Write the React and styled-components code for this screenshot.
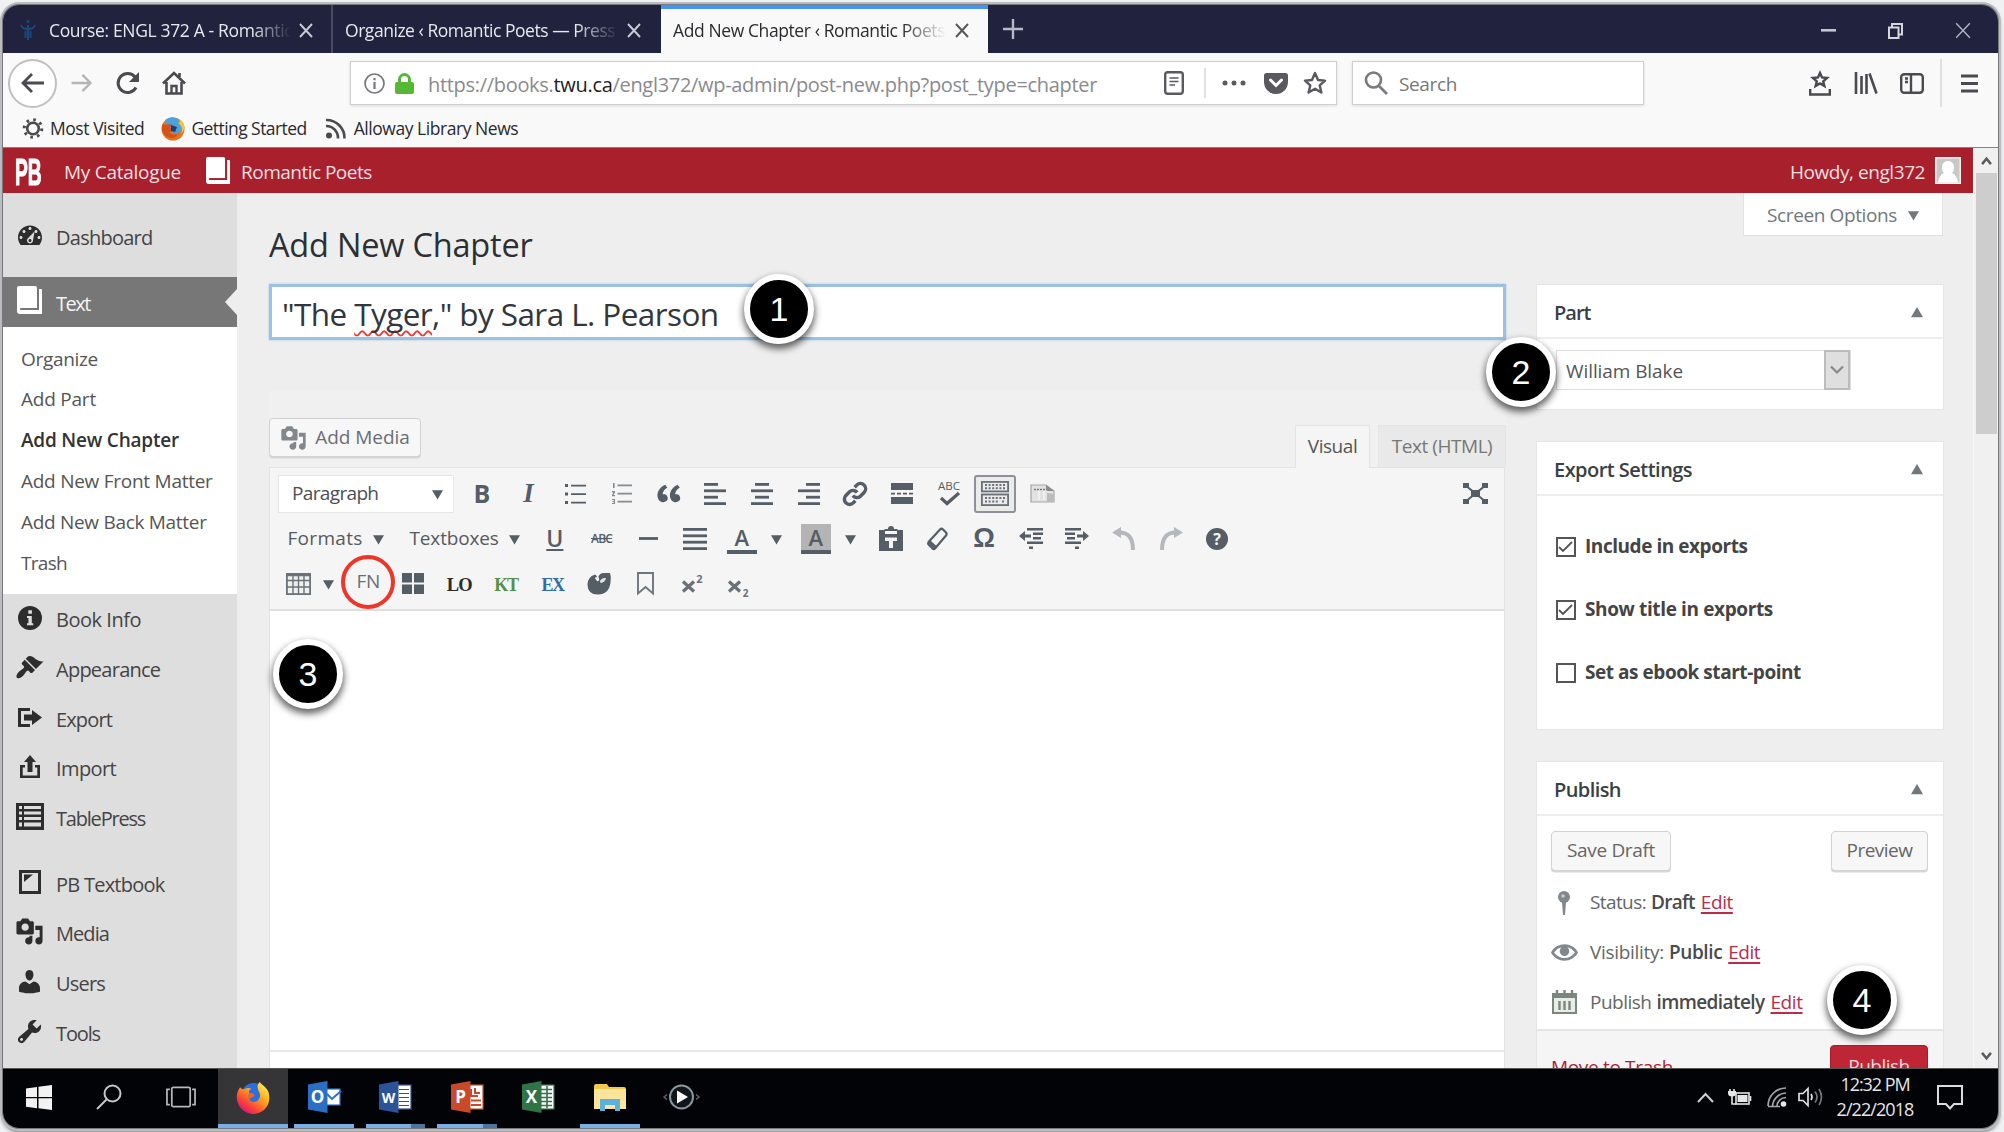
import React from 'react';
import styled, { createGlobalStyle, css } from 'styled-components';

const Global = createGlobalStyle`
  *, *::before, *::after { box-sizing: border-box; }
  body { margin: 0; background: #f0f1f3; font-family: "Open Sans", "Noto Sans", sans-serif; color: #555; }
  svg { display: block; flex: none; overflow: visible; }
`;

/* ---------- shared ---------- */

const T = styled.span`
  display: inline-block;
  flex: none;
  white-space: nowrap;
  line-height: 1.36;
  font-size: ${(p) => p.$s || 19}px;
  font-weight: ${(p) => p.$w || 400};
  letter-spacing: ${(p) => p.$ls || 0}px;
  padding: ${(p) => p.$pt || 0}px 0 ${(p) => p.$pb || 0}px;
  margin-left: ${(p) => p.$ml || 0};
  ${(p) => p.$c && css`color: ${p.$c};`}
`;

const Icon = ({ size = 26, w, h, box = '0 0 20 20', color = 'currentColor', d, children }) => (
  <svg width={w || size} height={h || size} viewBox={box} preserveAspectRatio="none" fill={color}>
    {d ? <path d={d} fillRule="evenodd" /> : children}
  </svg>
);

const D = {
  dashboard: 'M3.76 16h12.48c1.1-1.37 1.76-3.11 1.76-5 0-4.42-3.58-8-8-8s-8 3.58-8 8c0 1.89.66 3.63 1.76 5zM10 4c.55 0 1 .45 1 1s-.45 1-1 1-1-.45-1-1 .45-1 1-1zM6 6c.55 0 1 .45 1 1s-.45 1-1 1-1-.45-1-1 .45-1 1-1zm8 0c.55 0 1 .45 1 1s-.45 1-1 1-1-.45-1-1 .45-1 1-1zm-5.37 5.55L13 7l-1 6c0 1.1-.9 2-2 2s-2-.9-2-2c0-.57.24-1.08.63-1.45zM4 10c.55 0 1 .45 1 1s-.45 1-1 1-1-.45-1-1 .45-1 1-1zm12 0c.55 0 1 .45 1 1s-.45 1-1 1-1-.45-1-1 .45-1 1-1zm-5 3c0-.55-.45-1-1-1s-1 .45-1 1 .45 1 1 1 1-.45 1-1z',
  users: 'M10 9.25c-2.27 0-2.73-3.44-2.73-3.44C7 4.02 7.82 2 9.97 2c2.16 0 2.98 2.02 2.71 3.81 0 0-.41 3.44-2.68 3.44zm0 2.57L12.72 10c2.39 0 4.52 2.33 4.52 4.53v2.49s-3.65 1.13-7.24 1.13c-3.65 0-7.24-1.13-7.24-1.13v-2.49c0-2.25 1.94-4.48 4.47-4.48z',
  tools: 'M16.68 9.77c-1.34 1.34-3.3 1.67-4.95.99l-5.41 6.52c-.99.99-2.59.99-3.58 0s-.99-2.59 0-3.57l6.52-5.42c-.68-1.65-.35-3.61.99-4.95 1.28-1.28 3.12-1.62 4.72-1.06l-2.89 2.89 2.82 2.82 2.86-2.87c.53 1.58.18 3.39-1.08 4.65zM3.81 16.21c.4.39 1.04.39 1.43 0 .4-.4.4-1.04 0-1.43-.39-.4-1.03-.4-1.43 0-.39.39-.39 1.03 0 1.43z',
  brush: 'M14.48 11.06L7.41 3.99l1.5-1.5c.5-.56 2.3-.47 3.51.32 1.21.8 1.43 1.28 2.91 2.1 1.18.64 2.45 1.26 4.45.85zm-.71.71L6.7 4.7 4.93 6.47c-.39.39-.39 1.02 0 1.41l1.06 1.06c.39.39.39 1.03 0 1.42-.6.6-1.43 1.11-2.21 1.69-.35.26-.7.53-1.01.84C1.43 14.23.4 16.08 1.4 17.07c.99 1 2.84-.03 4.18-1.36.31-.31.58-.66.85-1.02.57-.78 1.08-1.61 1.69-2.21.39-.39 1.02-.39 1.41 0l1.06 1.06c.39.39 1.02.39 1.41 0z',
  media: 'M13 11V4c0-.55-.45-1-1-1h-1.67L9 1H5L3.67 3H2c-.55 0-1 .45-1 1v7c0 .55.45 1 1 1h10c.55 0 1-.45 1-1zM7 4.5c1.38 0 2.5 1.12 2.5 2.5S8.38 9.5 7 9.5 4.5 8.38 4.5 7 5.62 4.5 7 4.5zM14 6h5v10.5c0 1.38-1.12 2.5-2.5 2.5S14 17.88 14 16.5s1.12-2.5 2.5-2.5c.17 0 .34.02.5.05V9h-3V6zm-4 8.05V13h2v3.5c0 1.38-1.12 2.5-2.5 2.5S7 17.88 7 16.5 8.12 14 9.5 14c.17 0 .34.02.5.05z',
  eye: 'M19.7 9.4C17.7 6 14 3.9 10 3.9S2.3 6 .3 9.4L0 10l.3.6c2 3.4 5.7 5.5 9.7 5.5s7.7-2.1 9.7-5.5l.3-.6-.3-.6zM10 14.1c-3.1 0-6-1.6-7.7-4.1C3.6 8 5.7 6.6 8 6.1c-.9.6-1.5 1.7-1.5 2.9 0 1.9 1.6 3.5 3.5 3.5s3.5-1.6 3.5-3.5c0-1.2-.6-2.3-1.5-2.9 2.3.5 4.4 1.9 5.7 3.9-1.7 2.5-4.6 4.1-7.7 4.1z',
  quote: 'M9.49 13.22c0-.74-.2-1.38-.61-1.9-.62-.78-1.83-.88-2.53-.72-.29-1.65 1.11-3.75 2.92-4.65L7.88 4c-2.73 1.3-5.42 4.28-4.96 8.05C3.21 14.43 4.59 16 6.54 16c.85 0 1.56-.25 2.12-.75s.83-1.18.83-2.03zm8.05 0c0-.74-.2-1.38-.61-1.9-.63-.78-1.83-.88-2.53-.72-.29-1.65 1.11-3.75 2.92-4.65L15.93 4c-2.73 1.3-5.41 4.28-4.95 8.05.29 2.38 1.66 3.95 3.61 3.95.85 0 1.56-.25 2.12-.75s.83-1.18.83-2.03z',
};

const Screen = styled.div`
  position: relative;
  width: 2004px;
  height: 1132px;
  padding: 5px 6px 4px 3px;
  background: #f0f1f3;
  overflow: hidden;
`;

const Window = styled.div`
  display: flex;
  flex-direction: column;
  width: 1995px;
  height: 1123px;
  border-radius: 16px;
  overflow: hidden;
  background: #eee;
  box-shadow: 0 0 0 1px #77797c, 0 0 0 3px #babcbf, 0 3px 4px 1px rgba(0, 0, 0, 0.55);
`;

/* ---------- browser chrome ---------- */

const TabStrip = styled.div`
  display: flex;
  height: 48px;
  flex: none;
  background: #20223e;
  color: #e8e8ee;
`;

const Tab = styled.div`
  display: flex;
  align-items: center;
  width: ${(p) => p.$w}px;
  padding: 2px 0 0 ${(p) => p.$pl}px;
  border-right: ${(p) => (p.$divider ? '2px solid #4a4b62' : '0')};
  ${(p) => p.$active && css`
    background: #f9f9fa;
    color: #2b2b30;
    border-top: 4px solid #4593f8;
    padding-top: 0;
    padding-bottom: 2px;
  `}
`;

const TabTitle = styled.div`
  width: ${(p) => p.$w}px;
  overflow: hidden;
  white-space: nowrap;
  font-size: 17.5px;
  font-weight: 500;
  letter-spacing: ${(p) => p.$ls}px;
  line-height: 26px;
  mask-image: linear-gradient(to right, #000 84%, transparent 100%);
`;

const TabIcon = styled.div`
  display: flex;
  width: ${(p) => p.$w}px;
  padding-left: ${(p) => p.$pl || 0}px;
`;

const CloseX = ({ size = 14, sw = 2, color = '#c9cad4' }) => (
  <svg width={size} height={size + 1} viewBox="0 0 14 14" preserveAspectRatio="none" stroke={color} strokeWidth={sw} fill="none">
    <path d="M1 1L13 13M13 1L1 13" />
  </svg>
);

const NewTab = styled.div`display: flex; align-items: center; margin: 0 auto 0 15px;`;

const WinControls = styled.div`
  display: flex;
  align-items: center;
  gap: 52px;
  padding: 3px 27px 0 0;
`;

const NavBar = styled.div`
  display: flex;
  align-items: center;
  height: 60px;
  flex: none;
  background: #f9f9fa;
  color: #4a4a4f;
`;

const BackButton = styled.div`
  display: flex;
  align-items: center;
  justify-content: center;
  width: 49px;
  height: 49px;
  margin-left: 5px;
  border: 2px solid #c0c0c2;
  border-radius: 50%;
  background: #fff;
`;

const NavIcon = styled.div`
  display: flex;
  align-items: center;
  justify-content: center;
  width: ${(p) => p.$w || 46}px;
  flex: none;
  margin-left: ${(p) => (p.$push ? 'auto' : 0)};
  margin-right: ${(p) => p.$mr || 0}px;
`;

const Field = styled.div`
  display: flex;
  align-items: center;
  width: ${(p) => p.$w}px;
  height: 44px;
  margin-left: ${(p) => p.$ml}px;
  background: #fff;
  border: 1.5px solid #cfcfd1;
  box-shadow: 0 1px 3px rgba(0, 0, 0, 0.12);
`;

const Host = styled.b`font-weight: 500; color: #1c1c1f;`;

const Rule = styled.div`width: 2px; height: ${(p) => p.$h}px; background: #e0e0e2; flex: none;`;

const Bookmarks = styled.div`
  display: flex;
  align-items: center;
  height: 34px;
  flex: none;
  padding: 0 0 3px 19px;
  background: #f9f9fa;
  color: #2a2a2e;
`;

const Bookmark = styled.div`
  display: flex;
  align-items: center;
  gap: ${(p) => p.$gap}px;
  margin-right: ${(p) => p.$mr || 0}px;
`;

/* ---------- WordPress frame ---------- */

const Viewport = styled.div`
  display: flex;
  height: 921px;
  flex: none;
  overflow: hidden;
  border-top: 1px solid #c4666f;
`;

const Site = styled.div`display: flex; flex-direction: column; width: 1970px; flex: none;`;

const AdminBar = styled.div`
  display: flex;
  align-items: center;
  height: 45px;
  flex: none;
  padding: 4px 12px 0 12px;
  background: #a9202d;
  color: #f6dfe1;
`;

const Logo = styled.span`
  display: inline-block;
  width: 27px;
  font: bold 37px/36px "Liberation Sans Narrow", "Liberation Sans", sans-serif;
  transform: scaleX(0.52);
  transform-origin: left center;
  -webkit-text-stroke: 1.2px #fff;
  color: #fff;
`;

const SiteMark = styled.div`margin: -5px 10px 0 25px;`;

const Avatar = styled.div`margin: -5px 0 0 10px;`;

const Columns = styled.div`display: flex; height: 876px; flex: none;`;

const Sidebar = styled.nav`
  width: 234px;
  flex: none;
  background: #dedede;
  color: #444;
`;

const MenuItem = styled.div`
  position: relative;
  display: flex;
  align-items: center;
  height: ${(p) => p.$h || 49.7}px;
  margin-top: ${(p) => p.$mt || 0}px;
  padding-bottom: ${(p) => p.$pb || 0}px;
  ${(p) => p.$active && css`
    background: #777;
    color: #f4f4f4;
    &::after {
      content: '';
      position: absolute;
      right: 0;
      top: 12px;
      border: 13px solid transparent;
      border-left: 0;
      border-right: 12px solid #eee;
    }
  `}
`;

const MenuIcon = styled.div`
  display: flex;
  justify-content: center;
  width: 53px;
  flex: none;
  color: ${(p) => (p.$active ? '#fff' : '#2d2d2d')};
  margin-top: -4px;
`;

const SubMenu = styled.div`
  height: 267px;
  padding: 12px 0 0 18px;
  background: #fff;
`;

const SubItem = styled.div`
  display: flex;
  align-items: center;
  height: 40.9px;
  color: ${(p) => (p.$current ? '#333' : '#555')};
`;

const Main = styled.main`width: 1736px; flex: none; background: #eee; padding-left: 32px;`;

const PageHead = styled.div`
  display: flex;
  justify-content: space-between;
  align-items: flex-start;
  height: 91px;
  padding-right: 30px;
`;

const Heading = styled.h1`
  margin: 30px 0 0;
  font-size: 32.5px;
  font-weight: 400;
  line-height: 44px;
  letter-spacing: -0.2px;
  color: #2c2f33;
`;

const ScreenOptions = styled.div`
  display: flex;
  align-items: center;
  gap: 11px;
  height: 43px;
  width: 200px;
  padding: 1px 0 0 23px;
  background: #fff;
  border: 1px solid #e2e2e2;
  border-top: 0;
  color: #72777c;
`;

const Body = styled.div`display: flex; align-items: flex-start; gap: 30px;`;

/* ---------- editor column ---------- */

const EditorCol = styled.div`width: 1237px; flex: none;`;

const TitleInput = styled.div`
  display: flex;
  align-items: center;
  height: 56px;
  padding: 3px 0 0 10px;
  background: #fff;
  border: 3px solid #9dc1e4;
  box-shadow: 0 0 2px rgba(30, 140, 190, 0.35);
  font-size: 31.5px;
  letter-spacing: -0.58px;
  line-height: 44px;
  color: #32373c;
  white-space: pre;
`;

const Misspelt = styled.span`
  text-decoration: underline wavy #ee3b35 1.6px;
  text-decoration-skip-ink: none;
  text-underline-offset: 4px;
`;

const EditorTools = styled.div`
  display: flex;
  align-items: flex-end;
  height: 76px;
  margin-top: 51px;
  background: #f0f0f0;
`;

const Button = styled.div`
  display: flex;
  align-items: center;
  justify-content: center;
  width: ${(p) => p.$w}px;
  height: ${(p) => p.$h}px;
  border: 1.5px solid ${(p) => (p.$primary ? '#a81c2a' : '#d2d2d2')};
  border-radius: 4px;
  background: ${(p) => (p.$primary ? '#c02536' : '#f7f7f7')};
  box-shadow: 0 1.5px 0 #d6d6d6;
  color: ${(p) => (p.$primary ? '#f7dcdf' : '#666')};
`;

const AddMedia = styled(Button)`gap: 8px; margin: 0 auto 10px 0; color: #6a6e74;`;

const EditorTab = styled.div`
  display: flex;
  align-items: center;
  justify-content: center;
  width: ${(p) => p.$w}px;
  height: ${(p) => (p.$active ? 43 : 42)}px;
  margin-bottom: ${(p) => (p.$active ? -1 : 0)}px;
  margin-left: ${(p) => p.$ml || 0}px;
  border: 1.5px solid #e4e4e4;
  border-bottom: 0;
  background: ${(p) => (p.$active ? '#f5f5f5' : '#e9e9e9')};
  color: ${(p) => (p.$active ? '#555' : '#777')};
  z-index: 1;
`;

const Editor = styled.div`height: 601px; border: 1.5px solid #e3e3e3; border-bottom: 0; background: #fff; width: 1236px;`;

const Toolbar = styled.div`
  height: 143px;
  padding-top: 3px;
  background: #f5f5f5;
  border-bottom: 2px solid #e0e0e0;
  color: #555d66;
`;

const ToolRow = styled.div`display: flex; align-items: center; height: 45px; padding-left: ${(p) => p.$pl}px;`;

const Cell = styled.div`
  position: relative;
  display: flex;
  align-items: center;
  justify-content: center;
  width: ${(p) => p.$w || 46.7}px;
  height: 45px;
  flex: none;
  padding-top: ${(p) => p.$pt || 0}px;
  margin-left: ${(p) => p.$ml || 0};
  margin-right: ${(p) => p.$mr || 0}px;
`;

const FormatSelect = styled.div`
  display: flex;
  align-items: center;
  justify-content: space-between;
  width: 176px;
  height: 38px;
  padding: 0 10px 0 13px;
  margin-right: 4.5px;
  border: 1.5px solid #e6e6e6;
  background: #fff;
  color: #4b4e55;
`;

const DropLabel = styled.div`display: flex; align-items: center; gap: 10px; width: ${(p) => p.$w}px; color: #555a62;`;

const Pressed = styled.div`
  display: flex;
  align-items: center;
  justify-content: center;
  width: 42px;
  height: 38px;
  border: 2.5px solid #8e9298;
  border-radius: 3px;
  background: #ebebeb;
`;

const Letter = styled.span`
  font-family: ${(p) => p.$f || '"Open Sans", sans-serif'};
  font-size: ${(p) => p.$s}px;
  font-weight: ${(p) => p.$w || 700};
  font-style: ${(p) => (p.$italic ? 'italic' : 'normal')};
  text-decoration: ${(p) => p.$deco || 'none'};
  letter-spacing: ${(p) => p.$ls || 0}px;
  line-height: 1;
  ${(p) => p.$c && css`color: ${p.$c};`}
`;

const Swatch = styled.div`
  display: flex;
  align-items: center;
  justify-content: center;
  width: 30px;
  height: 30px;
  border-bottom: 4px solid #555d66;
  background: ${(p) => p.$bg || 'transparent'};
`;

const Ring = styled.div`
  position: absolute;
  left: -6px;
  top: -6px;
  width: 54px;
  height: 54px;
  border: 4px solid #ee3529;
  border-radius: 50%;
`;

const Canvas = styled.div`height: 441px; border-bottom: 2px solid #e8e8e8;`;

/* ---------- meta boxes ---------- */

const SideCol = styled.div`display: flex; flex-direction: column; gap: 31px; width: 408px; flex: none;`;

const Box = styled.section`
  height: ${(p) => p.$h}px;
  flex: none;
  background: #fff;
  border: 1.5px solid #e6e6e6;
`;

const BoxHead = styled.div`
  display: flex;
  align-items: center;
  justify-content: space-between;
  height: 54px;
  padding: 3px 20px 0 17px;
  border-bottom: 2px solid #eee;
  color: #3a3f45;
`;

const Select = styled.div`
  display: flex;
  align-items: center;
  justify-content: space-between;
  width: 295px;
  height: 40px;
  margin: 11px 0 0 19px;
  padding-left: 9px;
  border: 1.5px solid #ddd;
  color: #555;
`;

const SelectButton = styled.div`
  display: flex;
  align-items: center;
  justify-content: center;
  width: 26px;
  height: 40px;
  border: 2px solid #bcbcbc;
  background: #dfdfdf;
`;

const CheckRow = styled.div`
  display: flex;
  align-items: center;
  gap: 9px;
  height: 63px;
  padding-left: 19px;
  color: #444;
`;

const CheckList = styled.div`padding-top: 19px;`;

const Check = styled.div`
  display: flex;
  align-items: center;
  justify-content: center;
  width: 20px;
  height: 20px;
  border: 2px solid #555;
  background: #fff;
`;

const ButtonRow = styled.div`display: flex; justify-content: space-between; padding: 15px 15px 0 14px; height: 62px;`;

const StatusRow = styled.div`display: flex; align-items: center; height: 49.8px; padding-left: 13px; color: #666;`;

const StatusIcon = styled.div`display: flex; justify-content: center; width: 28px; margin-right: 12px; color: #82878c;`;

const Strong = styled(T)`margin: 0 6px 0 5px; color: #4a4a4a;`;

const EditLink = styled(T)`text-decoration: underline; text-underline-offset: 3px; text-decoration-thickness: 1.5px; color: #bb2c4a;`;

const PublishFoot = styled.div`
  display: flex;
  justify-content: space-between;
  align-items: flex-start;
  height: 90px;
  margin-top: 2px;
  padding: 14px 15px 0 14px;
  background: #f5f5f5;
  border-top: 2px solid #e6e6e6;
`;

/* ---------- scrollbar ---------- */

const Scrollbar = styled.div`
  display: flex;
  flex-direction: column;
  align-items: center;
  width: 25px;
  flex: none;
  background: #f0f0f0;
  border-left: 1px solid #f8f8f8;
`;

const ScrollArrow = styled.div`display: flex; align-items: center; justify-content: center; height: 25px; width: 25px;`;
const Thumb = styled.div`width: 21px; height: 261px; background: #cdcdcd; margin-bottom: auto;`;

/* ---------- taskbar ---------- */

const Taskbar = styled.div`
  display: flex;
  height: 60px;
  flex: none;
  background: #020307;
  border-top: 1px solid #555;
  color: #e6e6e6;
`;

const Task = styled.div`
  display: flex;
  flex-direction: column;
  align-items: center;
  justify-content: center;
  width: ${(p) => p.$w || 71.5}px;
  flex: none;
  background: ${(p) => (p.$active ? '#353538' : 'transparent')};
  position: relative;
  padding-bottom: 3px;
`;

const OpenBar = styled.div`
  position: absolute;
  bottom: 0;
  left: ${(p) => (p.$full ? 0 : 6)}px;
  right: ${(p) => (p.$full ? 0 : 6)}px;
  height: 4px;
  background: ${(p) => (p.$multi ? 'linear-gradient(to right, #78aee6 77%, #4d74a0 77%)' : '#78aee6')};
`;

const Tray = styled.div`display: flex; align-items: center; margin-left: auto; padding-bottom: 3px;`;

const Clock = styled.div`
  display: flex;
  flex-direction: column;
  align-items: center;
  width: 86px;
  gap: 1px;
  margin: -1px 19px 0 6px;
`;

/* ---------- annotation badges ---------- */

const Badge = styled.div`
  position: absolute;
  left: ${(p) => p.$x - 35}px;
  top: ${(p) => p.$y - 35}px;
  display: flex;
  align-items: center;
  justify-content: center;
  width: 70px;
  height: 70px;
  border: 6px solid #fff;
  border-radius: 50%;
  background: #000;
  box-shadow: 0 4px 7px 1px rgba(0, 0, 0, 0.6);
  color: #fff;
  font: 400 34px/1 "Liberation Sans", Arial, sans-serif;
`;

/* ---------- drawings ---------- */

const Caret = ({ up, size = 11, color = '#555d66' }) => (
  <svg width={size} height={size * 0.85} viewBox="0 0 10 8" fill={color} preserveAspectRatio="none">
    <path d={up ? 'M5 0L10 8H0z' : 'M0 1H10L5 9z'} />
  </svg>
);

const Firefox = ({ size, id }) => (
  <svg width={size} height={size} viewBox="0 0 32 32">
    <defs>
      <linearGradient id={id} x1="0.85" y1="0.05" x2="0.2" y2="0.9">
        <stop offset="0" stopColor="#fff04a" />
        <stop offset="0.45" stopColor="#ff9a1f" />
        <stop offset="0.8" stopColor="#fb3b3f" />
        <stop offset="1" stopColor="#d62070" />
      </linearGradient>
    </defs>
    <circle cx="16" cy="14" r="12" fill="#2a6fe0" />
    <path
      d="M3 6c1 1 2 2 4 2 2-1 5-2 7 0-2 0-3 2-2 4 2 0 4 1 4 2-1 2-4 2-4 4 1 3 6 3 8 1 3-3 3-6 1-9-1-3-2-6 1-9 2 3 5 4 7 7 3 4 3 10 1 15-3 6-9 9-14 9C8 32 1 26 0 18-1 13 1 9 3 6z"
      fill={`url(#${id})`}
    />
    <path d="M12 12c2-1 5 0 5 2-1 2-4 1-5 4-2-1-2-4 0-6z" fill="#f5621f" />
  </svg>
);

const FirefoxClassic = () => (
  <svg width="24" height="24" viewBox="0 0 24 24">
    <circle cx="12" cy="12" r="11.500" fill="#e8711c" />
    <path d="M4 3Q10-2 17 2q5 3 6 9-3 5-8 5-7 0-9-5-2-4-2-8z" fill="#4ba3dc" />
    <path d="M17 6q6 4 3 11 3-3 3.500-7Q23 4 18 2q2 3-1 4z" fill="#f6c33c" />
    <path d="M1.500 7Q5 8 8 7l4 1q-3 1-3 3l4 1q-1 3-5 3 3 4 9 2-3 5-8 4-7-2-8-8z" fill="#d4521a" />
    <path d="M10 8l6 2-2 5-4-1z" fill="#1d3f73" />
  </svg>
);

const BookIcon = ({ w = 26, h = 28, line = '#777' }) => (
  <svg width={w} height={h} viewBox="0 0 26 28" fill="#fff">
    <path d="M2 0h16q2 0 2 2v20H4q-1 0-1 1t1 1h18V3h2q1 0 1 1v24H3q-3 0-3-3V2q0-2 2-2z" />
    <path d="M4 22.8h16.8V2" stroke={line} strokeWidth="1.5" fill="none" />
  </svg>
);

const Lines = ({ rows, w = 22, h = 22, sw = 2.8 }) => (
  <svg width={w} height={h} viewBox={`0 0 ${w} ${h}`} stroke="currentColor" strokeWidth={sw} fill="none">
    {rows.map(([a, b], i) => {
      const y = rows.length > 1 ? sw / 2 + (i * (h - sw)) / (rows.length - 1) : h / 2;
      return <path key={i} d={`M${a} ${y}H${b}`} />;
    })}
  </svg>
);

const OfficeIcon = ({ letter, color, kind }) => (
  <svg width="34" height="34" viewBox="0 0 34 34">
    <rect x="18" y={kind === 'mail' ? 9 : 5} width="15" height={kind === 'mail' ? 16 : 24} fill="#fff" stroke={kind === 'mail' ? '#2a6fc4' : color} strokeWidth="1.2" />
    {kind === 'mail' && <path d="M20 14l5 5 9-8" stroke="#2a6fc4" strokeWidth="2" fill="none" />}
    {kind === 'doc' && <path d="M21 9.5h10M21 13.5h10M21 17.5h10M21 21.5h10M21 25.5h10" stroke={color} strokeWidth="1.2" />}
    {kind === 'slide' && <path d="M21 9v7h7M25 8v5h5M21 20.5h10M21 25h10" stroke={color} strokeWidth="2" fill="none" />}
    {kind === 'grid' && <path d="M20 9.500h11M20 13.500h11M20 17.500h11M20 21.500h11M20 25.500h11M26 6v22" stroke={color} strokeWidth="1.6" />}
    <path d="M1 4.500L20.500 1v32L1 29.500z" fill={color} />
    <text x="10.500" y="23" textAnchor="middle" fill="#fff" fontFamily="Open Sans, sans-serif" fontWeight="700" fontSize={letter === 'W' ? 14 : 17}>
      {letter}
    </text>
  </svg>
);

const StarOutline = () => (
  <svg width="24" height="24" viewBox="0 0 24 24" fill="none" stroke="#5a5a5e" strokeWidth="2.4" strokeLinejoin="round">
    <path d="M12 2l3 7 7 .6-5.300 4.800 1.700 7.200L12 17.700 5.600 21.600l1.700-7.200L2 9.600 9 9z" />
  </svg>
);

const MENU_TOP = [
  ['Book Info', -0.48, 'info'],
  ['Appearance', -0.75, 'brush'],
  ['Export', -0.86, 'export'],
  ['Import', -0.6, 'import'],
  ['TablePress', -1.2, 'table'],
];
const MENU_BOTTOM = [
  ['PB Textbook', -0.75, 'textbook'],
  ['Media', -0.93, 'media'],
  ['Users', -0.81, 'users'],
  ['Tools', -1.13, 'tools'],
];
const SUBMENU = [
  ['Organize', -0.31],
  ['Add Part', -0.22],
  ['Add New Chapter', -0.2, true],
  ['Add New Front Matter', -0.26],
  ['Add New Back Matter', -0.3],
  ['Trash', -0.7],
];

const SideGlyph = ({ name }) => {
  switch (name) {
    case 'info':
      return (
        <Icon size={24}>
          <circle cx="10" cy="10" r="10" />
          <path d="M8.600 3.500h3v3h-3zM7.500 8.300h4v6h1.200v1.700H7.500v-1.700h1.200v-4.300H7.500z" fill="#dedede" />
        </Icon>
      );
    case 'export':
      return (
        <Icon w={24} h={19} box="0 0 24 19">
          <path d="M0 0h12v3H3v13h9v3H0zM6 6.500h8V2l10 7.500L14 17v-4.500H6z" />
        </Icon>
      );
    case 'import':
      return (
        <Icon w={20} h={23} box="0 0 20 23">
          <path d="M10 0l6 7h-3.500v10h-5V7H4zM0 10h5v2.500H2.700v8h14.600v-8H15V10h5v13H0z" />
        </Icon>
      );
    case 'table':
      return (
        <Icon w={28} h={27} box="0 0 28 27">
          <path d="M0 0h28v27H0zM3 3v3h3V3zm5 0v3h17V3zM3 8.500v3h3v-3zm5 0v3h17v-3zM3 14v3h3v-3zm5 0v3h17v-3zM3 19.500v4h3v-4zm5 0v4h17v-4z" fillRule="evenodd" />
        </Icon>
      );
    case 'textbook':
      return (
        <Icon w={22} h={24} box="0 0 22 24">
          <path d="M0 0h22v24H0zM3 3v18h16V3z" fillRule="evenodd" />
          <path d="M5 4.500h9L5 12z" />
        </Icon>
      );
    default:
      return <Icon size={29} d={D[name]} />;
  }
};

const Side = ({ label, ls, glyph, mt }) => (
  <MenuItem $mt={mt}>
    <MenuIcon><SideGlyph name={glyph} /></MenuIcon>
    <T $s={20} $ls={ls}>{label}</T>
  </MenuItem>
);

const MetaBox = ({ title, ls, h, children }) => (
  <Box $h={h}>
    <BoxHead>
      <T $s={20} $w={600} $ls={ls}>{title}</T>
      <Caret up size={12} color="#72777c" />
    </BoxHead>
    {children}
  </Box>
);

const Option = ({ label, ls, on }) => (
  <CheckRow>
    <Check>
      {on && (
        <svg width="14" height="12" viewBox="0 0 14 12" fill="none" stroke="#555" strokeWidth="1.800">
          <path d="M0 6l4 4L13 1" />
        </svg>
      )}
    </Check>
    <T $w={700} $ls={ls}>{label}</T>
  </CheckRow>
);

function BrowserChrome() {
  return (
    <>
      <TabStrip>
        <Tab $w={330} $pl={17} $divider>
          <TabIcon $w={29}>
            <svg width="16" height="22" viewBox="0 0 16 22" fill="none" stroke="#18497f" strokeWidth="2">
              <path d="M8 6v15M1 6q1 4 7 4t7-4M5.500 12v7M10.500 12v7" />
              <circle cx="8" cy="2.500" r="1.600" fill="#18497f" stroke="none" />
            </svg>
          </TabIcon>
          <TabTitle $w={242} $ls={-0.35}>Course: ENGL 372 A - Romantic</TabTitle>
          <TabIcon $w={24} $pl={8}><CloseX /></TabIcon>
        </Tab>
        <Tab $w={328} $pl={12}>
          <TabTitle $w={274} $ls={-0.46}>Organize ‹ Romantic Poets — Press</TabTitle>
          <TabIcon $w={24} $pl={8}><CloseX /></TabIcon>
        </Tab>
        <Tab $w={327} $pl={12} $active>
          <TabTitle $w={273} $ls={-0.4}>Add New Chapter ‹ Romantic Poets</TabTitle>
          <TabIcon $w={24} $pl={9}><CloseX color="#55555a" /></TabIcon>
        </Tab>
        <NewTab>
          <svg width="20" height="20" viewBox="0 0 20 20" stroke="#b8b9c6" strokeWidth="2.4"><path d="M10 0V20M0 10H20" /></svg>
        </NewTab>
        <WinControls>
          <svg width="15" height="4" viewBox="0 0 15 4"><rect width="15" height="2.600" fill="#c4c5ce" /></svg>
          <svg width="15" height="16" viewBox="0 0 15 16" fill="none" stroke="#d6d6dc" strokeWidth="2"><path d="M1 4.500h9.500V15H1zM4 4V1h10v10.500h-3" /></svg>
          <CloseX size={16} sw={1.3} color="#b0b1be" />
        </WinControls>
      </TabStrip>

      <NavBar>
        <BackButton>
          <svg width="24" height="20" viewBox="0 0 24 20" fill="none" stroke="#4a4a4f" strokeWidth="2.800"><path d="M23 10H2M11 1L2 10l9 9" /></svg>
        </BackButton>
        <NavIcon $w={48}>
          <svg width="23" height="18" viewBox="0 0 24 20" fill="none" stroke="#b5b5b8" strokeWidth="2.600"><path d="M1 10H22M13 1l9 9-9 9" /></svg>
        </NavIcon>
        <NavIcon $w={46}>
          <svg width="24" height="23" viewBox="0 0 24 23" fill="none" stroke="#4a4a4f" strokeWidth="3"><path d="M19 5A9.500 9.500 0 1 0 20 15.500" /><path d="M23 0v10h-10z" fill="#4a4a4f" stroke="none" /></svg>
        </NavIcon>
        <NavIcon $w={46}>
          <svg width="24" height="24" viewBox="0 0 24 24" fill="none" stroke="#4a4a4f" strokeWidth="2.600"><path d="M1 12.500L12 2l11 10.500M4.500 11v11.500h15V11M17.500 6V2" /><path d="M9.500 22v-7h5v7" strokeWidth="2.400" /></svg>
        </NavIcon>
        <Field $w={987} $ml={153}>
          <NavIcon $w={47}>
            <svg width="21" height="21" viewBox="0 0 21 21" fill="none" stroke="#77777b" strokeWidth="1.700"><circle cx="10.500" cy="10.500" r="9.500" /><path d="M10.500 9v7M10.500 5v2.300" strokeWidth="2.200" /></svg>
          </NavIcon>
          <NavIcon $w={12} $mr={18}>
            <svg width="19" height="21" viewBox="0 0 19 21"><path d="M4.500 10V6.500a5 5 0 0 1 10 0V10" fill="none" stroke="#54b834" strokeWidth="3" /><rect y="9" width="19" height="12" rx="2" fill="#54b834" /></svg>
          </NavIcon>
          <T $s={20} $ls={-0.31} $pt={3} $c="#8a8a8e">
            https://books.<Host>twu.ca</Host>/engl372/wp-admin/post-new.php?post_type=chapter
          </T>
          <NavIcon $w={52} $push>
            <svg width="20" height="24" viewBox="0 0 20 24" fill="none" stroke="#5a5a5e" strokeWidth="2.400"><rect x="1.200" y="1.200" width="17.600" height="21.600" rx="2.500" /><path d="M5.500 7h9M5.500 10.500h9M5.500 14h5.500" strokeWidth="1.700" /></svg>
          </NavIcon>
          <NavIcon $w={9}><Rule $h={30} /></NavIcon>
          <NavIcon $w={49}>
            <svg width="24" height="6" viewBox="0 0 24 6" fill="#5a5a5e"><circle cx="3" cy="3" r="2.500" /><circle cx="12" cy="3" r="2.500" /><circle cx="21" cy="3" r="2.500" /></svg>
          </NavIcon>
          <NavIcon $w={36}>
            <svg width="24" height="21" viewBox="0 0 24 21"><path d="M2.500 0h19Q24 0 24 2.500V9a12 12 0 0 1-24 0V2.500Q0 0 2.500 0z" fill="#5a5a5e" /><path d="M6.500 7l5.500 5.500L17.500 7" fill="none" stroke="#fff" strokeWidth="3" strokeLinecap="round" /></svg>
          </NavIcon>
          <NavIcon $w={42}><StarOutline /></NavIcon>
        </Field>
        <Field $w={292} $ml={15}>
          <NavIcon $w={46}>
            <svg width="24" height="24" viewBox="0 0 24 24" fill="none" stroke="#7a7a7e" strokeWidth="2.600"><circle cx="9.500" cy="9" r="7.500" /><path d="M15 15l8 8" /></svg>
          </NavIcon>
          <T $ls={-0.36} $pt={3} $c="#77777b">Search</T>
        </Field>
        <NavIcon $w={46} $push>
          <svg width="22" height="25" viewBox="0 0 22 25" fill="none" stroke="#4a4a4f" strokeWidth="2.400"><path d="M11 2l2 4.500 5 .5-3.800 3.300 1.200 4.700L11 12.500 6.600 15l1.200-4.700L4 7l5-.5zM1.200 18v5.500h19.600V18" /></svg>
        </NavIcon>
        <NavIcon $w={46}>
          <svg width="24" height="22" viewBox="0 0 24 22" fill="none" stroke="#4a4a4f" strokeWidth="2.600"><path d="M2 0v22M7.500 4v18M12.500 2v20M15.500 1.500L22.500 21.500" /></svg>
        </NavIcon>
        <NavIcon $w={46}>
          <svg width="24" height="21" viewBox="0 0 24 21" fill="none" stroke="#4a4a4f" strokeWidth="2.400"><rect x="1.200" y="1.200" width="21.600" height="18.600" rx="3" /><path d="M11 1v19M5 5.500h3M5 9h3" /></svg>
        </NavIcon>
        <NavIcon $w={12}><Rule $h={48} /></NavIcon>
        <NavIcon $w={44} $mr={7}>
          <svg width="17" height="19" viewBox="0 0 17 19" stroke="#4a4a4f" strokeWidth="3"><path d="M0 2h17M0 9.500h17M0 17h17" /></svg>
        </NavIcon>
      </NavBar>

      <Bookmarks>
        <Bookmark $gap={6} $mr={17}>
          <svg width="22" height="21" viewBox="0 0 22 21" fill="none" stroke="#4a4a4f"><circle cx="11" cy="10.500" r="5.800" strokeWidth="2.600" /><circle cx="11" cy="10.500" r="8.800" strokeWidth="3" strokeDasharray="2.600 4.310" /></svg>
          <T $s={17.5} $ls={-0.45}>Most Visited</T>
        </Bookmark>
        <Bookmark $gap={6} $mr={18}>
          <FirefoxClassic />
          <T $s={17.5} $ls={-0.56}>Getting Started</T>
        </Bookmark>
        <Bookmark $gap={8}>
          <svg width="21" height="21" viewBox="0 0 21 21" fill="none" stroke="#4a4a4f" strokeWidth="2.600"><circle cx="4" cy="17.500" r="3" fill="#4a4a4f" stroke="none" /><path d="M1 8a12 12 0 0 1 12 12.500M1 2a18 18 0 0 1 18.500 18.500" /></svg>
          <T $s={17.5} $ls={-0.45}>Alloway Library News</T>
        </Bookmark>
      </Bookmarks>
    </>
  );
}

function FormattingToolbar() {
  return (
    <Toolbar>
      <ToolRow $pl={8}>
        <FormatSelect><T $ls={-0.65}>Paragraph</T><Caret /></FormatSelect>
        <Cell><Letter $s={25}>B</Letter></Cell>
        <Cell><Letter $s={27} $italic $f='"Liberation Serif", serif'>I</Letter></Cell>
        <Cell>
          <Icon w={21} h={20} box="0 0 21 20"><path d="M0 0h3v3H0zM0 8.500h3v3H0zM0 17h3v3H0zM6 .7h15v1.800H6zM6 9.200h15V11H6zM6 17.700h15v1.800H6z" /></Icon>
        </Cell>
        <Cell>
          <Icon w={20} h={21} box="0 0 20 21" color="#858b92"><path d="M1 0h1.600v5H1zM0 8h3v1.400L1.500 12H3v1.200H0V12l1.500-2.600H0zM0 16h3v5H0v-1h1.800v-1H.5v-1h1.300v-1H0zM5.500 1.500H20v1.800H5.500zM5.500 9.700H20v1.800H5.500zM5.500 17.700H20v1.800H5.500z" /></Icon>
        </Cell>
        <Cell><Icon w={31} h={29} d={D.quote} /></Cell>
        <Cell><Lines rows={[[0, 14], [0, 22], [0, 14], [0, 22]]} /></Cell>
        <Cell><Lines rows={[[4, 18], [0, 22], [4, 18], [0, 22]]} /></Cell>
        <Cell><Lines rows={[[8, 22], [0, 22], [8, 22], [0, 22]]} /></Cell>
        <Cell>
          <svg width="26" height="26" viewBox="0 0 24 24" fill="none" stroke="currentColor" strokeWidth="3.200"><path d="M10 13.500a4.700 4.700 0 0 0 7 .5l3.400-3.400a4.700 4.700 0 0 0-6.800-6.800L11.700 5.700M14 10.500a4.700 4.700 0 0 0-7-.5l-3.400 3.400a4.700 4.700 0 0 0 6.800 6.800l1.900-1.900" /></svg>
        </Cell>
        <Cell>
          <Icon w={22} h={21} box="0 0 22 21"><path d="M0 0h22v7H0zM0 14h22v7H0zM0 9.700h4v1.800H0zM6 9.700h4v1.800H6zM12 9.700h4v1.800h-4zM18 9.700h4v1.800h-4z" /></Icon>
        </Cell>
        <Cell>
          <svg width="24" height="25" viewBox="0 0 24 25"><text x="12" y="9" textAnchor="middle" fontFamily="Open Sans, sans-serif" fontSize="11.500" fill="#555d66">ABC</text><path d="M4 17l6 5.500L22 12" fill="none" stroke="#555d66" strokeWidth="3.200" /></svg>
        </Cell>
        <Cell>
          <Pressed>
            <svg width="28" height="25" viewBox="0 0 28 25" fill="none" stroke="#6a7078" strokeWidth="1.800"><rect x=".9" y=".9" width="26.200" height="9.500" /><rect x=".9" y="13.500" width="26.200" height="10.600" /><path d="M4 4h20M4 7.300h20M4 17h20M4 20.500h14M21 20.500h3" strokeDasharray="2 1.600" strokeWidth="2" /></svg>
          </Pressed>
        </Cell>
        <Cell>
          <svg width="25" height="19" viewBox="0 0 25 19"><path d="M1 1h15l8 6v11H1z" fill="#e2e2e2" stroke="#a5a5a5" strokeWidth="1.200" /><path d="M17 18V9l7 1v8z" fill="#bbb" /><path d="M4 5.500h13" stroke="#777" strokeWidth="1.500" strokeDasharray="2 1" /><path d="M9 7v9M14 7v9" stroke="#f5f5f5" strokeWidth="1.400" /><path d="M16 1l8 6h-6q-2 0-2-2z" fill="#8b8b8b" /></svg>
        </Cell>
        <Cell $ml="auto" $mr={5}>
          <svg width="25" height="21" viewBox="0 0 25 21" fill="#555d66"><path d="M2 2l21 17M23 2L2 19" stroke="#555d66" strokeWidth="2" /><path d="M8 7h9v7H8zM0 0h6v5H0zM19 0h6v5h-6zM0 16h6v5H0zM19 16h6v5h-6z" /></svg>
        </Cell>
      </ToolRow>
      <ToolRow $pl={17.5}>
        <DropLabel $w={122}><T $ls={0.3}>Formats</T><Caret /></DropLabel>
        <DropLabel $w={122}><T $ls={-0.15}>Textboxes</T><Caret /></DropLabel>
        <Cell><Letter $s={23} $w={600} $deco="underline">U</Letter></Cell>
        <Cell><Letter $s={12} $w={600} $ls={-0.8} $deco="line-through">ABC</Letter></Cell>
        <Cell><Lines rows={[[0, 19]]} w={19} h={3} /></Cell>
        <Cell><Lines rows={[[0, 24], [0, 24], [0, 24], [0, 24]]} w={24} /></Cell>
        <Cell $w={47}><Swatch><Letter $s={22} $w={600}>A</Letter></Swatch></Cell>
        <Cell $w={22}><Caret /></Cell>
        <Cell $w={57}><Swatch $bg="#b4b4b4"><Letter $s={22} $w={600}>A</Letter></Swatch></Cell>
        <Cell $w={12} $mr={11}><Caret /></Cell>
        <Cell>
          <Icon w={24} h={24} box="0 0 24 24"><path d="M0 3h5l1-1h3a3 3 0 0 1 6 0h3l1 1h5v21H0zM6 4v3h12V4zM6 10.500v3.500h4v7h4v-7h4v-3.500z" fillRule="evenodd" /></Icon>
        </Cell>
        <Cell>
          <svg width="21" height="24" viewBox="0 0 21 24" fill="none" stroke="#555d66" strokeWidth="2.200"><path d="M1.500 15L13 2.500q1.500-1.500 3 0l3 3q1.300 1.300 0 3L8 21.500q-1 1-2.500 0L2 18q-1.500-1.500-.5-3z" /><path d="M2 14.500l6.500 6" strokeWidth="3.500" /></svg>
        </Cell>
        <Cell><Letter $s={27} $w={700} $f='"Liberation Sans", sans-serif'>Ω</Letter></Cell>
        <Cell>
          <Icon w={24} h={21} box="0 0 24 21"><path d="M8 0h16v2.500H8zM14 4.500h10V7H14zM14 9h8v2.500h-8zM8 13.500h16V16H8zM10 18.500h4V21h-4zM0 8l6-5v3.500h6v3H6V13z" /></Icon>
        </Cell>
        <Cell>
          <Icon w={24} h={21} box="0 0 24 21"><path d="M0 0h16v2.500H0zM0 4.500h10V7H0zM2 9h8v2.500H2zM0 13.500h16V16H0zM10 18.500h4V21h-4zM24 8l-6-5v3.500h-6v3h6V13z" /></Icon>
        </Cell>
        <Cell>
          <svg width="24" height="23" viewBox="0 0 24 23" fill="#b4b7bb"><path d="M6 5.500q15-1 15 17.500" fill="none" stroke="#b4b7bb" strokeWidth="4" /><path d="M0 5.500L9 0v11z" /></svg>
        </Cell>
        <Cell>
          <svg width="24" height="23" viewBox="0 0 24 23" fill="#b4b7bb"><path d="M18 5.500q-15-1-15 17.500" fill="none" stroke="#b4b7bb" strokeWidth="4" /><path d="M24 5.500L15 0v11z" /></svg>
        </Cell>
        <Cell>
          <svg width="22" height="22" viewBox="0 0 22 22"><circle cx="11" cy="11" r="11" fill="#555d66" /><text x="11" y="17" textAnchor="middle" fontFamily="Open Sans, sans-serif" fontWeight="700" fontSize="16" fill="#f5f5f5">?</text></svg>
        </Cell>
      </ToolRow>
      <ToolRow $pl={5.5}>
        <Cell>
          <svg width="25" height="22" viewBox="0 0 25 22" fill="none" stroke="#6b7179" strokeWidth="1.800"><rect x=".9" y=".9" width="23.200" height="20.200" fill="#eef2ea" /><path d="M1 2h23" strokeWidth="2.500" /><path d="M1 7.500h23M1 14h23M7 2v19M12.500 2v19M18 2v19" strokeWidth="1.400" /></svg>
        </Cell>
        <Cell $w={12} $mr={13}><Caret /></Cell>
        <Cell $w={42}><T $s={19} $ls={-0.3} $pb={4} $c="#6a6e76">FN</T><Ring /></Cell>
        <Cell><Icon w={22} h={21} box="0 0 22 21"><path d="M0 0h10v9.500H0zM12 0h10v9.500H12zM0 11.500h10V21H0zM12 11.500h10V21H12z" /></Icon></Cell>
        <Cell $pt={3}><Letter $s={18.5} $ls={-1} $f='"Liberation Serif", serif' $c="#2c2c2c">LO</Letter></Cell>
        <Cell $pt={3}><Letter $s={18} $ls={-1.3} $f='"Liberation Serif", serif' $c="#569048">KT</Letter></Cell>
        <Cell $pt={3}><Letter $s={18} $ls={-1.3} $f='"Liberation Serif", serif' $c="#2f6da3">EX</Letter></Cell>
        <Cell>
          <svg width="24" height="22" viewBox="0 0 24 22"><path d="M8 1.500q2 1 3 3.500Q12 0 17 0h6q1.500 4 .5 9.500Q22 21.500 11 21.500.5 21.500.500 11.500.500 4 8 1.500z" fill="#555d66" /><path d="M10 3.500q1.500 1.500 1.500 4M8.500 4.500l2.500 3.500" stroke="#f5f5f5" strokeWidth="1.700" fill="none" /><path d="M13 8.500q1-4 6-3.500-1 4.500-5.500 5z" fill="#e4e5e7" /></svg>
        </Cell>
        <Cell><svg width="17" height="23" viewBox="0 0 17 23" fill="none" stroke="#70757d" strokeWidth="1.900"><path d="M1 1h15v20.500L8.500 15 1 21.500z" /></svg></Cell>
        <Cell>
          <svg width="22" height="20" viewBox="0 0 22 20"><path d="M1 7.500l11 10M12 7.500L1 17.500" stroke="#6a7078" strokeWidth="3.200" /><text x="17.500" y="8.500" textAnchor="middle" fontFamily="Open Sans, sans-serif" fontWeight="700" fontSize="11" fill="#6a7078">2</text></svg>
        </Cell>
        <Cell>
          <svg width="22" height="20" viewBox="0 0 22 20"><path d="M1 7.500l11 10M12 7.500L1 17.500" stroke="#6a7078" strokeWidth="3.200" /><text x="17.500" y="23" textAnchor="middle" fontFamily="Open Sans, sans-serif" fontWeight="700" fontSize="10" fill="#6a7078">2</text></svg>
        </Cell>
      </ToolRow>
    </Toolbar>
  );
}

function EditorColumn() {
  return (
    <EditorCol>
      <TitleInput>"The <Misspelt>Tyger</Misspelt>," by Sara L. Pearson</TitleInput>
      <EditorTools>
        <AddMedia $w={152} $h={39}>
          <Icon w={27} h={26} d={D.media} color="#82878c" />
          <T $ls={-0.05}>Add Media</T>
        </AddMedia>
        <EditorTab $w={75} $active><T $ls={-0.45}>Visual</T></EditorTab>
        <EditorTab $w={128} $ml={8}><T $ls={-0.45}>Text (HTML)</T></EditorTab>
      </EditorTools>
      <Editor>
        <FormattingToolbar />
        <Canvas />
      </Editor>
    </EditorCol>
  );
}

function MetaColumn() {
  return (
    <SideCol>
      <MetaBox title="Part" ls={-1} h={126}>
        <Select>
          <T $ls={-0.08} $pt={3}>William Blake</T>
          <SelectButton>
            <svg width="14" height="10" viewBox="0 0 14 10" fill="none" stroke="#888" strokeWidth="2.200"><path d="M1 1.500l6 6 6-6" /></svg>
          </SelectButton>
        </Select>
      </MetaBox>
      <MetaBox title="Export Settings" ls={-0.53} h={289}>
        <CheckList>
          <Option label="Include in exports" ls={-0.45} on />
          <Option label="Show title in exports" ls={-0.37} on />
          <Option label="Set as ebook start-point" ls={-0.45} />
        </CheckList>
      </MetaBox>
      <MetaBox title="Publish" ls={-0.58} h={360}>
        <ButtonRow>
          <Button $w={120} $h={40}><T $ls={-0.34}>Save Draft</T></Button>
          <Button $w={97} $h={40}><T $ls={-0.51}>Preview</T></Button>
        </ButtonRow>
        <StatusRow>
          <StatusIcon>
            <svg width="12" height="24" viewBox="0 0 12 24" fill="#82878c"><circle cx="6" cy="6" r="6" /><path d="M4 11h4l-1 13H5z" /><circle cx="5" cy="5" r="1.800" fill="#c9cbcd" /></svg>
          </StatusIcon>
          <T $ls={-0.6}>Status:</T><Strong $w={600} $ls={-0.75}>Draft</Strong><EditLink $ls={-0.44}>Edit</EditLink>
        </StatusRow>
        <StatusRow>
          <StatusIcon><Icon w={27} h={27} d={D.eye} /></StatusIcon>
          <T $ls={-0.3}>Visibility:</T><Strong $w={600} $ls={-0.4}>Public</Strong><EditLink $ls={-0.44}>Edit</EditLink>
        </StatusRow>
        <StatusRow>
          <StatusIcon>
            <svg width="25" height="24" viewBox="0 0 25 24" fill="none" stroke="#7d8580" strokeWidth="2"><rect x="1" y="4" width="23" height="19" fill="#e6eee8" /><path d="M1 6h23" strokeWidth="4" /><path d="M5 0v5M12.500 0v5M20 0v5M7.500 11v9M12.500 11v9M17.500 11v9" strokeWidth="2.400" /></svg>
          </StatusIcon>
          <T $ls={-0.5}>Publish</T><Strong $w={600} $ls={-0.6}>immediately</Strong><EditLink $ls={-0.44}>Edit</EditLink>
        </StatusRow>
        <PublishFoot>
          <T $ls={-0.33} $pt={10} $c="#b3202f">Move to Trash</T>
          <Button $primary $w={98} $h={44}><T $ls={-0.5}>Publish</T></Button>
        </PublishFoot>
      </MetaBox>
    </SideCol>
  );
}

function WindowsTaskbar() {
  return (
    <Taskbar>
      <Task $w={72}>
        <svg width="26" height="25" viewBox="0 0 26 25" fill="#f2f2f2"><path d="M0 3.500l11-1.500v10H0zM12.500 1.800L26 0v12H12.500zM0 13.300h11v10L0 21.800zM12.500 13.300H26V25l-13.500-1.700z" /></svg>
      </Task>
      <Task $w={68}>
        <svg width="26" height="26" viewBox="0 0 26 26" fill="none" stroke="#c8c8c8" strokeWidth="2"><circle cx="16.500" cy="9.500" r="8" /><path d="M10.500 15.500L1 25" /></svg>
      </Task>
      <Task $w={75}>
        <svg width="30" height="22" viewBox="0 0 31 22" fill="none" stroke="#b8b8b8" strokeWidth="1.800"><rect x="6" y="1" width="19" height="20" rx="1.500" /><path d="M4 3H1v16h3M27 3h3v16h-3" /></svg>
      </Task>
      <Task $w={70} $active><Firefox size={33} id="ffTask" /><OpenBar $full /></Task>
      <Task><OfficeIcon letter="O" color="#2a6fc4" kind="mail" /><OpenBar /></Task>
      <Task><OfficeIcon letter="W" color="#2b5397" kind="doc" /><OpenBar $multi /></Task>
      <Task><OfficeIcon letter="P" color="#c9492b" kind="slide" /><OpenBar $multi /></Task>
      <Task><OfficeIcon letter="X" color="#2f7347" kind="grid" /></Task>
      <Task>
        <svg width="32" height="27" viewBox="0 0 32 27"><path d="M0 2q0-2 2-2h11l2 3h15q2 0 2 2v20H0z" fill="#f2c94c" /><path d="M0 5h32v20H0z" fill="#fbe59a" /><path d="M6 27V15h20v12h-5v-6H11v6z" fill="#5bb0dd" /></svg>
        <OpenBar />
      </Task>
      <Task>
        <svg width="35" height="26" viewBox="0 0 35 26"><circle cx="17.500" cy="13" r="11.500" fill="#12151b" stroke="#8d989c" strokeWidth="2" /><path d="M3 10.500L0 13l3 2.500M32 10.500l3 2.500-3 2.500" fill="none" stroke="#6d5a78" strokeWidth="1.500" /><path d="M13 6.500l11 6.500-11 6.500z" fill="#fff" /></svg>
      </Task>
      <Tray>
        <NavIcon $w={34}><svg width="17" height="11" viewBox="0 0 17 11" fill="none" stroke="#d0d0d0" strokeWidth="2"><path d="M1 10l7.500-8L16 10" /></svg></NavIcon>
        <NavIcon $w={36}>
          <svg width="24" height="17" viewBox="0 0 24 17" fill="none" stroke="#e6e6e6" strokeWidth="1.600"><rect x="8" y="4" width="13" height="11" /><path d="M9.500 6h10v7h-10z" fill="#e6e6e6" stroke="none" /><path d="M22.500 7v5M4 7v8h4" /><path d="M0 2h8v2q0 3.500-4 3.500T0 4zM1.500 0v3M6.500 0v3" fill="#e6e6e6" stroke="none" /><path d="M2 0v3M6 0v3" /></svg>
        </NavIcon>
        <NavIcon $w={37}>
          <svg width="20" height="20" viewBox="0 0 20 20" fill="none" stroke="#a5a5a5" strokeWidth="1.700"><path d="M1 19A18 18 0 0 1 19 1M5.500 19.500A14 14 0 0 1 19 6M10 19.500a9 9 0 0 1 9-9M1 19.500h12" /><circle cx="16.500" cy="17" r="2.800" fill="#e6e6e6" stroke="none" /></svg>
        </NavIcon>
        <NavIcon $w={31}>
          <svg width="25" height="20" viewBox="0 0 25 20" fill="none" stroke="#e0e0e0" strokeWidth="1.700"><path d="M1 6.500h4L10 1.500v17l-5-5H1z" /><path d="M13 7q2 3 0 6" /><path d="M17 4.500q4 5.500 0 11M21 2q5 8 0 16" stroke="#777" /></svg>
        </NavIcon>
        <Clock>
          <T $s={18} $ls={-1.07}>12:32 PM</T>
          <T $s={18} $ls={-0.92}>2/22/2018</T>
        </Clock>
        <NavIcon $w={26} $mr={35}>
          <svg width="26" height="25" viewBox="0 0 26 25" fill="none" stroke="#dcdcdc" strokeWidth="2"><path d="M1 1h24v18h-8l-4 4.500L9 19H1z" /></svg>
        </NavIcon>
      </Tray>
    </Taskbar>
  );
}

export default function App() {
  return (
    <Screen>
      <Global />
      <Window>
        <BrowserChrome />
        <Viewport>
          <Site>
            <AdminBar>
              <Logo>PB</Logo>
              <T $ls={-0.27} $ml="22px">My Catalogue</T>
              <SiteMark><BookIcon w={25} h={27} line="#a9202d" /></SiteMark>
              <T $ls={-0.52}>Romantic Poets</T>
              <T $ls={-0.44} $ml="auto">Howdy, engl372</T>
              <Avatar>
                <svg width="26" height="27" viewBox="0 0 26 27">
                  <rect width="26" height="27" fill="#f2f2f2" />
                  <rect x="1.500" y="1.500" width="23" height="24" fill="#c8c8c8" />
                  <path d="M13 4q6 0 6 7 0 3-2 5 5 2 6 9.500H3Q4 18 9 16q-2-2-2-5 0-7 6-7z" fill="#fff" />
                </svg>
              </Avatar>
            </AdminBar>
            <Columns>
              <Sidebar>
                <MenuItem $mt={20} $h={64} $pb={14}>
                  <MenuIcon><Icon size={30} d={D.dashboard} /></MenuIcon>
                  <T $s={20} $ls={-0.75}>Dashboard</T>
                </MenuItem>
                <MenuItem $h={50} $active>
                  <MenuIcon $active><BookIcon /></MenuIcon>
                  <T $s={20} $ls={-1.5} $pt={3}>Text</T>
                </MenuItem>
                <SubMenu>
                  {SUBMENU.map(([label, ls, current]) => (
                    <SubItem key={label} $current={current}>
                      <T $w={current ? 600 : 400} $ls={ls}>{label}</T>
                    </SubItem>
                  ))}
                </SubMenu>
                {MENU_TOP.map(([l, ls, g], i) => <Side key={l} label={l} ls={ls} glyph={g} mt={i ? 0 : 1} />)}
                {MENU_BOTTOM.map(([l, ls, g], i) => <Side key={l} label={l} ls={ls} glyph={g} mt={i ? 0 : 16} />)}
              </Sidebar>
              <Main>
                <PageHead>
                  <Heading>Add New Chapter</Heading>
                  <ScreenOptions>
                    <T $ls={-0.38} $pt={3}>Screen Options</T>
                    <Caret color="#72777c" />
                  </ScreenOptions>
                </PageHead>
                <Body>
                  <EditorColumn />
                  <MetaColumn />
                </Body>
              </Main>
            </Columns>
          </Site>
          <Scrollbar>
            <ScrollArrow><svg width="11" height="8" viewBox="0 0 12 9" fill="none" stroke="#5a5a5a" strokeWidth="2.800"><path d="M1 8l5-6 5 6" /></svg></ScrollArrow>
            <Thumb />
            <ScrollArrow><svg width="11" height="8" viewBox="0 0 12 9" fill="none" stroke="#5a5a5a" strokeWidth="2.800"><path d="M1 1l5 6 5-6" /></svg></ScrollArrow>
          </Scrollbar>
        </Viewport>
        <WindowsTaskbar />
      </Window>
      <Badge $x={779} $y={309}>1</Badge>
      <Badge $x={1521} $y={372}>2</Badge>
      <Badge $x={308} $y={674}>3</Badge>
      <Badge $x={1862} $y={1000}>4</Badge>
    </Screen>
  );
}
